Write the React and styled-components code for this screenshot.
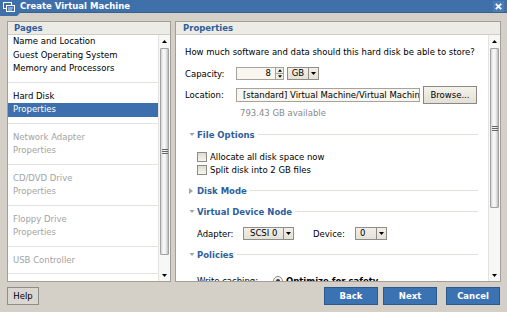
import styled, { createGlobalStyle } from "styled-components"

const GlobalStyle = createGlobalStyle`
  *, *::before, *::after { box-sizing: border-box; }
  html, body { margin: 0; padding: 0; background: #d4d0c8; }
  body {
    font-family: "DejaVu Sans", Verdana, sans-serif;
    font-size: 8.5px;
    color: #000;
  }
`

const BLUE = "#3f70aa"

const Window = styled.div`
  width: 507px;
  height: 312px;
  display: flex;
  flex-direction: column;
  background: #d4d0c8;
  overflow: hidden;
`

/* title bar */
const TitleBar = styled.div`
  display: flex;
  align-items: flex-start;
  height: 16px;
`
const TitleTab = styled.div`
  width: 20px;
  height: 16px;
  padding: 2px 0 0 3px;
  background: ${BLUE};
  clip-path: polygon(0 0, 100% 0, 100% 13px, 17px 16px, 0 16px);
`
const TitleMain = styled.div`
  flex: 1;
  height: 13px;
  display: flex;
  align-items: center;
  justify-content: space-between;
  padding-right: 3px;
  background: ${BLUE};
  color: #fff;
  font-weight: bold;
  border-bottom: 1px solid #36628f;
`
const CloseBox = styled.div`
  width: 11px;
  height: 11px;
  display: flex;
  align-items: center;
  justify-content: center;
  background: #4a7cb7;
`

/* panels */
const Body = styled.div`
  display: flex;
  gap: 4px;
  height: 266px;
  padding: 5px 6px 0 7px;
`
const Panel = styled.section`
  width: ${({ $w }) => $w}px;
  display: flex;
  flex-direction: column;
  border: 1px solid #a19f98;
  background: #fff;
`
const PanelHeader = styled.div`
  height: 13px;
  line-height: 12px;
  padding-left: ${({ $pad }) => $pad}px;
  background: #ecebe5;
  border-bottom: 1px solid #cfcdc6;
  color: #2f5e9d;
  font-weight: bold;
`
const PanelBody = styled.div`
  flex: 1;
  min-height: 0;
  display: flex;
  overflow: hidden;
`

/* page list */
const PageList = styled.div`
  flex: 1;
  overflow: hidden;
`
const PageGroup = styled.div`
  padding: 7px 0 6px;
  border-bottom: 1px solid #e4e3df;
  &:first-child { padding-top: 0; }
`
const PageItem = styled.div`
  height: 13.5px;
  line-height: 13.5px;
  padding-left: 5px;
  white-space: nowrap;
  color: ${({ $selected, $disabled }) => ($selected ? "#fff" : $disabled ? "#a3a3a3" : "#000")};
  background: ${({ $selected }) => ($selected ? "#3d6fae" : "transparent")};
`

/* scrollbar */
const ScrollTrack = styled.div`
  width: 12px;
  display: flex;
  flex-direction: column;
  background: #f7f7f5;
  border-left: 1px solid #e3e3e0;
`
const ScrollArrow = styled.div`
  height: ${({ $h }) => $h}px;
  display: flex;
  align-items: center;
  justify-content: center;
`
const ScrollThumb = styled.div`
  height: ${({ $size }) => $size}px;
  margin: 0 1px;
  display: flex;
  align-items: center;
  justify-content: center;
  border: 1px solid #a2a2a2;
  border-radius: 1px;
  background: linear-gradient(to right, #d6d6d6, #fbfbfb 40%, #ececec 70%, #bcbcbc);
`
const ScrollRest = styled.div`
  flex: 1;
`

const Tri = ({ dir = "down", color = "#000", w = 5 }) => {
  const pts = {
    down: "0,0 5,0 2.5,3",
    up: "0,3 5,3 2.5,0",
    right: "0,0 4,3 0,6",
  }[dir]
  const vb = dir === "right" ? "0 0 4 6" : "0 0 5 3"
  const h = dir === "right" ? 6 : 3
  return (
    <svg width={dir === "right" ? 4 : w} height={h} viewBox={vb}>
      <polygon points={pts} fill={color} />
    </svg>
  )
}

const Scrollbar = ({ thumb }) => (
  <ScrollTrack>
    <ScrollArrow $h={13}><Tri dir="up" /></ScrollArrow>
    <ScrollThumb $size={thumb}>
      <svg width="6" height="5" viewBox="0 0 6 5">
        <path d="M0 0.5H6M0 2.5H6M0 4.5H6" stroke="#666" strokeWidth="1" />
      </svg>
    </ScrollThumb>
    <ScrollRest />
    <ScrollArrow $h={12}><Tri dir="down" /></ScrollArrow>
  </ScrollTrack>
)

/* properties form */
const Content = styled.div`
  flex: 1;
  min-width: 0;
  padding: 11px 10px 0 9px;
`
const Line = styled.div`
  height: 13px;
  line-height: 13px;
  white-space: nowrap;
  margin-top: ${({ $mt = 0 }) => $mt}px;
  padding-left: ${({ $indent = 0 }) => $indent}px;
  color: ${({ $muted }) => ($muted ? "#8a8a8a" : "inherit")};
`
const FieldRow = styled.div`
  display: flex;
  align-items: center;
  height: ${({ $h }) => $h}px;
  margin-top: ${({ $mt = 0 }) => $mt}px;
  padding-left: ${({ $indent = 0 }) => $indent}px;
  white-space: nowrap;
`
const Label = styled.span`
  width: ${({ $w }) => $w}px;
  margin-left: ${({ $ml = 0 }) => $ml}px;
  flex: none;
`
const TextInput = styled.div`
  width: ${({ $w }) => $w}px;
  height: ${({ $h }) => $h}px;
  line-height: ${({ $h }) => $h - 2}px;
  padding: ${({ $right }) => ($right ? "0 4px 0 0" : "0 0 0 6px")};
  text-align: ${({ $right }) => ($right ? "right" : "left")};
  overflow: hidden;
  white-space: nowrap;
  border: 1px solid #a5a39c;
  background: #f8f6ee;
`
const Spinner = styled.div`
  width: 8px;
  height: 13px;
  display: flex;
  flex-direction: column;
  border: 1px solid #a5a39c;
  border-left: none;
  background: #efede6;
`
const SpinHalf = styled.div`
  flex: 1;
  display: flex;
  align-items: center;
  justify-content: center;
  & + & { border-top: 1px solid #a5a39c; }
`
const Select = styled.div`
  width: ${({ $w }) => $w}px;
  height: 13px;
  margin-left: ${({ $ml = 0 }) => $ml}px;
  display: flex;
  border: 1px solid #8f8d86;
  background: linear-gradient(#f1efe8, #e4e1d8);
`
const SelectValue = styled.div`
  flex: 1;
  line-height: 11px;
  padding-left: ${({ $pad = 0 }) => $pad}px;
  text-align: ${({ $center }) => ($center ? "center" : "left")};
`
const SelectArrow = styled.div`
  width: 10px;
  display: flex;
  align-items: center;
  justify-content: center;
  border-left: 1px solid #8f8d86;
`
const BrowseButton = styled.button`
  width: 54px;
  height: 18px;
  margin-left: 3px;
  padding: 0;
  font: inherit;
  color: #000;
  border: 1px solid #8a8880;
  background: linear-gradient(#f4f2ec, #e2dfd6);
`

const SectionHeader = styled.div`
  display: flex;
  align-items: center;
  height: 13px;
  margin-top: 8px;
  padding-left: 4px;
  color: #2f5e9d;
  font-weight: bold;
  white-space: nowrap;
`
const Toggle = styled.span`
  width: 8px;
  display: flex;
  align-items: center;
`
const Rule = styled.span`
  flex: 1;
  height: 1px;
  margin-left: 3px;
  background: #e2e1dc;
`
const SectionBody = styled.div`
  padding: ${({ $pt = 9 }) => $pt}px 0 0 12px;
`
const Check = styled.span`
  width: 10px;
  height: 10px;
  margin-right: 3px;
  border: 1px solid #8d8b85;
  background: linear-gradient(#dedbd2, #f6f4ef);
`
const Radio = styled.span`
  width: 10px;
  height: 10px;
  margin-right: 3px;
  display: flex;
  align-items: center;
  justify-content: center;
  border: 1px solid #8d8b85;
  border-radius: 50%;
  background: #f6f4ef;
  &::after {
    content: "";
    width: 4px;
    height: 4px;
    border-radius: 50%;
    background: #333;
  }
`
const Strong = styled.span`
  font-weight: bold;
`

/* footer */
const Footer = styled.div`
  display: flex;
  align-items: flex-start;
  height: 30px;
  padding: 5px 7px 0 7px;
`
const HelpButton = styled.button`
  width: 32px;
  height: 18px;
  padding: 0;
  font: inherit;
  color: #000;
  border: 1px solid #8f8d87;
  background: #dad7d0;
`
const Spacer = styled.div`
  flex: 1;
`
const PrimaryButton = styled.button`
  width: 54px;
  height: 18px;
  margin-left: ${({ $ml = 0 }) => $ml}px;
  padding: 0;
  font: inherit;
  font-weight: bold;
  color: #fff;
  border: 1px solid #2c588b;
  background: #3b72b2;
`

const pages = [
  [{ t: "Name and Location" }, { t: "Guest Operating System" }, { t: "Memory and Processors" }],
  [{ t: "Hard Disk" }, { t: "Properties", selected: true }],
  [{ t: "Network Adapter", off: true }, { t: "Properties", off: true }],
  [{ t: "CD/DVD Drive", off: true }, { t: "Properties", off: true }],
  [{ t: "Floppy Drive", off: true }, { t: "Properties", off: true }],
  [{ t: "USB Controller", off: true }],
]

const Section = ({ title, open = true, children, pt }) => (
  <>
    <SectionHeader>
      <Toggle><Tri dir={open ? "down" : "right"} color="#a4a4a4" w={6} /></Toggle>
      {title}
      <Rule />
    </SectionHeader>
    {open && children && <SectionBody $pt={pt}>{children}</SectionBody>}
  </>
)

export default function App() {
  return (
    <Window>
      <GlobalStyle />
      <TitleBar>
        <TitleTab>
          <svg width="12" height="11" viewBox="0 0 12 11">
            <rect x="0.5" y="0.5" width="8" height="6" fill="none" stroke="#fff" />
            <rect x="3.5" y="3.5" width="8" height="6" fill={BLUE} stroke="#fff" />
            <path d="M5 6H10M5 8H9" stroke="#cfe0f4" />
          </svg>
        </TitleTab>
        <TitleMain>
          <span>Create Virtual Machine</span>
          <CloseBox>
            <svg width="7" height="7" viewBox="0 0 7 7">
              <path d="M0.8 0.8L6.2 6.2M6.2 0.8L0.8 6.2" stroke="#fff" strokeWidth="1.7" />
            </svg>
          </CloseBox>
        </TitleMain>
      </TitleBar>

      <Body>
        <Panel $w={164}>
          <PanelHeader $pad={6}>Pages</PanelHeader>
          <PanelBody>
            <PageList>
              {pages.map((group, i) => (
                <PageGroup key={i}>
                  {group.map((p, j) => (
                    <PageItem key={j} $selected={p.selected} $disabled={p.off}>{p.t}</PageItem>
                  ))}
                </PageGroup>
              ))}
            </PageList>
            <Scrollbar thumb={207} />
          </PanelBody>
        </Panel>

        <Panel $w={326}>
          <PanelHeader $pad={7}>Properties</PanelHeader>
          <PanelBody>
            <Content>
              <Line>How much software and data should this hard disk be able to store?</Line>
              <FieldRow $h={13} $mt={8}>
                <Label $w={51}>Capacity:</Label>
                <TextInput $w={40} $h={13} $right>8</TextInput>
                <Spinner>
                  <SpinHalf><Tri dir="up" w={4} /></SpinHalf>
                  <SpinHalf><Tri dir="down" w={4} /></SpinHalf>
                </Spinner>
                <Select $w={32} $ml={3}>
                  <SelectValue $center>GB</SelectValue>
                  <SelectArrow><Tri /></SelectArrow>
                </Select>
              </FieldRow>
              <FieldRow $h={18} $mt={6}>
                <Label $w={51}>Location:</Label>
                <TextInput $w={184} $h={14}>[standard] Virtual Machine/Virtual Machin</TextInput>
                <BrowseButton>Browse...</BrowseButton>
              </FieldRow>
              <Line $mt={3} $indent={55} $muted>793.43 GB available</Line>

              <Section title="File Options">
                <FieldRow $h={13}><Check />Allocate all disk space now</FieldRow>
                <FieldRow $h={13}><Check />Split disk into 2 GB files</FieldRow>
              </Section>

              <Section title="Disk Mode" open={false} />

              <Section title="Virtual Device Node">
                <FieldRow $h={13}>
                  <Label $w={46}>Adapter:</Label>
                  <Select $w={51}>
                    <SelectValue $pad={6}>SCSI 0</SelectValue>
                    <SelectArrow><Tri /></SelectArrow>
                  </Select>
                  <Label $w={42} $ml={19}>Device:</Label>
                  <Select $w={32}>
                    <SelectValue $pad={4}>0</SelectValue>
                    <SelectArrow><Tri /></SelectArrow>
                  </Select>
                </FieldRow>
              </Section>

              <Section title="Policies" pt={13}>
                <FieldRow $h={13}>
                  <Label $w={76}>Write caching:</Label>
                  <Radio />
                  <Strong>Optimize for safety</Strong>
                </FieldRow>
              </Section>
            </Content>
            <Scrollbar thumb={160} />
          </PanelBody>
        </Panel>
      </Body>

      <Footer>
        <HelpButton>Help</HelpButton>
        <Spacer />
        <PrimaryButton>Back</PrimaryButton>
        <PrimaryButton $ml={5}>Next</PrimaryButton>
        <PrimaryButton $ml={9}>Cancel</PrimaryButton>
      </Footer>
    </Window>
  )
}
